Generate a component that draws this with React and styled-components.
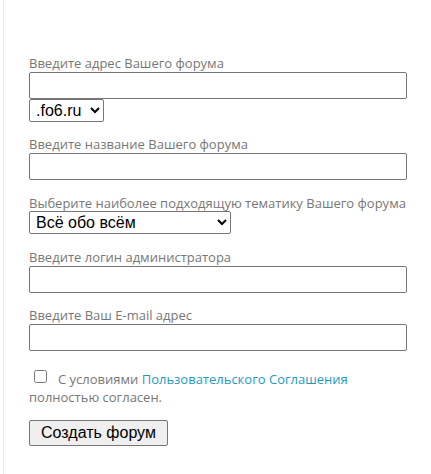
import React from "react";
import styled, { createGlobalStyle } from "styled-components";

const GlobalStyle = createGlobalStyle`
    body {
        margin: 0;
        background: #fff;
        font-family: "Open Sans", "Liberation Sans", sans-serif;
    }
`;

const Page = styled.div`
    margin-left: 3px;
    border-left: 1px solid #ececec;
    min-height: 474px;
    box-sizing: border-box;
    padding: 55px 0 0 25px;
`;

const Form = styled.form`
    display: flex;
    flex-direction: column;
    width: 378px;
`;

const Field = styled.div`
    display: flex;
    flex-direction: column;
    align-items: flex-start;
    margin-bottom: ${(props) => props.gap}px;
`;

const Label = styled.label`
    font-size: 13px;
    line-height: 16px;
    color: #777;
    margin-bottom: ${(props) => (props.tight ? 0 : 1)}px;
`;

const TextInput = styled.input`
    box-sizing: border-box;
    width: 378px;
    height: 27px;
    margin: 0;
    border: 1px solid #767676;
    border-radius: 2px;
    padding: 2px 4px;
    font-size: 14px;
`;

const Select = styled.select`
    box-sizing: border-box;
    height: 23px;
    width: ${(props) => props.width}px;
    margin: 0;
    font-family: "Liberation Sans", Arial, sans-serif;
    font-size: 16px;
    color: #000;
    border: 1px solid #767676;
    border-radius: 2px;
    background: #fff;
    padding: 0 2px;
`;

const Agree = styled.div`
    font-size: 13px;
    line-height: 18px;
    color: #777;
    margin-bottom: 14px;

    input {
        width: 13px;
        height: 13px;
        margin: 0 11px 0 5px;
        vertical-align: 1px;
    }

    a {
        color: #1d9bbf;
        text-decoration: none;
    }
`;

const SubmitButton = styled.button`
    align-self: flex-start;
    box-sizing: border-box;
    width: 139px;
    height: 26px;
    margin: 0;
    font-family: "Liberation Sans", Arial, sans-serif;
    font-size: 16px;
    color: #000;
    background: #efefef;
    border: 1px solid #767676;
    border-radius: 2px;
    padding: 0 6px;
`;

export default function App() {
    return (
        <>
            <GlobalStyle />
            <Page>
                <Form onSubmit={(e) => e.preventDefault()}>
                    <Field gap={14}>
                        <Label>Введите адрес Вашего форума</Label>
                        <TextInput type="text" />
                        <Select width={75} defaultValue="fo6">
                            <option value="fo6">.fo6.ru</option>
                        </Select>
                    </Field>
                    <Field gap={15}>
                        <Label>Введите название Вашего форума</Label>
                        <TextInput type="text" />
                    </Field>
                    <Field gap={15}>
                        <Label tight>Выберите наиболее подходящую тематику Вашего форума</Label>
                        <Select width={202} defaultValue="all">
                            <option value="all">Всё обо всём</option>
                        </Select>
                    </Field>
                    <Field gap={14}>
                        <Label>Введите логин администратора</Label>
                        <TextInput type="text" />
                    </Field>
                    <Field gap={19}>
                        <Label>Введите Ваш E-mail адрес</Label>
                        <TextInput type="email" />
                    </Field>
                    <Agree>
                        <input type="checkbox" />
                        С условиями <a href="#">Пользовательского Соглашения</a>
                        <br />
                        полностью согласен.
                    </Agree>
                    <SubmitButton type="submit">Создать форум</SubmitButton>
                </Form>
            </Page>
        </>
    );
}
